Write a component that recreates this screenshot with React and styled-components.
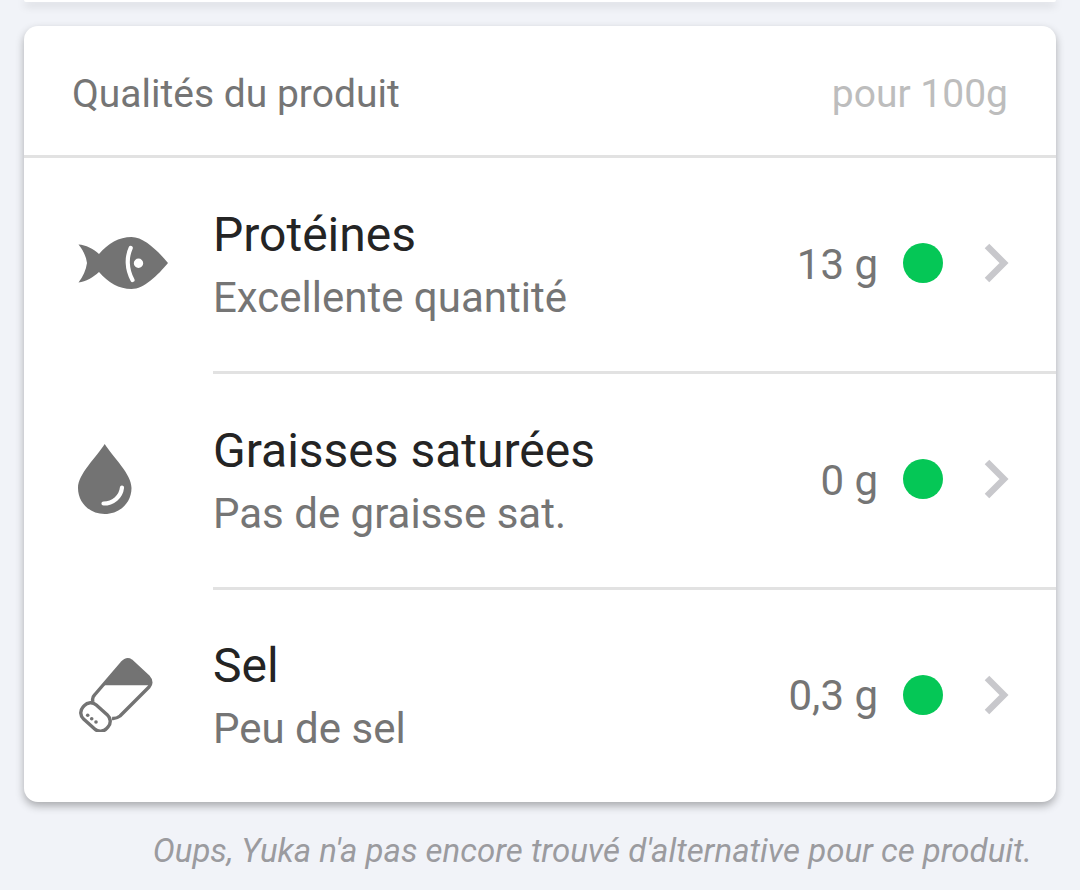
import styled, { createGlobalStyle } from "styled-components";

const GlobalStyle = createGlobalStyle`
  html, body {
    margin: 0;
    background: #f1f3f8;
    font-family: Roboto, "Noto Sans", sans-serif;
  }
`;

const rows = [
  { name: "Protéines", detail: "Excellente quantité", value: "13 g", Icon: FishIcon },
  { name: "Graisses saturées", detail: "Pas de graisse sat.", value: "0 g", Icon: DropIcon },
  { name: "Sel", detail: "Peu de sel", value: "0,3 g", Icon: SaltIcon },
];

function FishIcon() {
  return (
    <svg width="90" height="52" viewBox="0 0 90 52">
      <path
        fill="#737373"
        fillRule="evenodd"
        d="M0.5 7.5C8 8 15 11.5 21 17C30 6.5 41 0 53.5 0C66 0 80 14 90 26C80 38 66 52 53.5 52C41 52 30 45.5 21 35C15 40.5 8 44.5 0.5 45.5C5 40 8 33 9 26C8 19 5 13 0.5 7.5ZM60.5 21.5a4.7 4.7 0 1 0 0 9.4a4.7 4.7 0 1 0 0 -9.4Z"
      />
      <path d="M52.7 11C48.5 20 48.5 32 54.5 43" fill="none" stroke="#fff" strokeWidth="4.2" strokeLinecap="round" />
    </svg>
  );
}

function DropIcon() {
  return (
    <svg width="54" height="70" viewBox="0 0 54 70">
      <path
        fill="#737373"
        d="M26.7 0C35 13 53.5 30 53.5 44C53.5 59 41.5 70 26.7 70C12 70 0 59 0 44C0 30 18.5 13 26.7 0Z"
      />
      <path d="M25.5 59.5C35 59.5 43 53 44 43.5" fill="none" stroke="#fff" strokeWidth="4.2" strokeLinecap="round" />
    </svg>
  );
}

function SaltIcon() {
  return (
    <svg width="76" height="78" viewBox="-3 -5 76 78">
      <path
        fill="#737373"
        d="M21.8 26.3L41 4Q45.7 -1 50 1.8L67 17.5Q71 21 69.5 26.3Z"
      />
      <path
        d="M12 43C11 40 11.5 38 13.5 36L41 4Q45.7 -1 50 1.8L67 17.5Q72 23 68 28L39 57Q35 60 31 59.5"
        fill="none"
        stroke="#737373"
        strokeWidth="3.4"
        strokeLinejoin="round"
      />
      <rect
        x="-1.5"
        y="48.5"
        width="32"
        height="19"
        rx="8.5"
        transform="rotate(42 14.5 58)"
        fill="#fff"
        stroke="#737373"
        strokeWidth="3.4"
      />
      <circle cx="6.7" cy="56.3" r="1.8" fill="#737373" />
      <circle cx="10.7" cy="59.7" r="1.8" fill="#737373" />
      <circle cx="15" cy="63" r="1.8" fill="#737373" />
    </svg>
  );
}

function Chevron() {
  return (
    <svg width="26" height="40" viewBox="0 0 26 40">
      <path d="M3 3L20 20L3 37" fill="none" stroke="#c8c8cc" strokeWidth="6.4" />
    </svg>
  );
}

export default function App() {
  return (
    <>
      <GlobalStyle />
      <Page>
        <PreviousCard />
        <Card>
          <Header>
            <HeaderTitle>Qualités du produit</HeaderTitle>
            <HeaderUnit>pour 100g</HeaderUnit>
          </Header>
          {rows.map(({ name, detail, value, Icon }, i) => (
            <Row key={name} $last={i === rows.length - 1}>
              <IconCell>
                <Icon />
              </IconCell>
              <RowBody $last={i === rows.length - 1}>
                <Labels>
                  <Name>{name}</Name>
                  <Detail>{detail}</Detail>
                </Labels>
                <Value>{value}</Value>
                <Dot />
                <Chevron />
              </RowBody>
            </Row>
          ))}
        </Card>
        <Note>Oups, Yuka n'a pas encore trouvé d'alternative pour ce produit.</Note>
      </Page>
    </>
  );
}

const Page = styled.div`
  height: 890px;
  padding: 0 24px;
  box-sizing: border-box;
  overflow: hidden;
`;

const PreviousCard = styled.div`
  height: 2px;
  margin-bottom: 24px;
  background: #fff;
  border-radius: 0 0 12px 12px;
  box-shadow: 0 3px 8px rgba(0, 0, 0, 0.28);
`;

const Card = styled.section`
  background: #fff;
  border-radius: 14px;
  box-shadow: 0 4px 9px rgba(0, 0, 0, 0.3);
`;

const Header = styled.header`
  height: 132px;
  padding: 6px 48px 0;
  box-sizing: border-box;
  display: flex;
  align-items: center;
  justify-content: space-between;
  border-bottom: 3px solid #e2e2e2;
`;

const HeaderTitle = styled.span`
  font-size: 39px;
  color: #757575;
`;

const HeaderUnit = styled.span`
  font-size: 39px;
  color: #bdbdbd;
`;

const Row = styled.div`
  display: flex;
  height: ${(p) => (p.$last ? "212px" : "216px")};
`;

const IconCell = styled.div`
  width: 189px;
  padding: 0 0 7px 54px;
  box-sizing: border-box;
  display: flex;
  align-items: center;
  flex-shrink: 0;
`;

const RowBody = styled.div`
  flex: 1;
  display: flex;
  align-items: center;
  padding: 0 46px 3px 0;
  box-sizing: border-box;
  border-bottom: ${(p) => (p.$last ? "none" : "3px solid #e2e2e2")};
`;

const Labels = styled.div`
  flex: 1;
  display: flex;
  flex-direction: column;
  gap: 7px;
  padding-top: 6px;
`;

const Name = styled.div`
  font-size: 48px;
  line-height: 56px;
  color: #242424;
`;

const Detail = styled.div`
  font-size: 42px;
  line-height: 56px;
  color: #757575;
`;

const Value = styled.span`
  font-size: 42px;
  padding-top: 2px;
  color: #757575;
`;

const Dot = styled.span`
  width: 40px;
  height: 40px;
  margin: 0 41px 0 25px;
  border-radius: 50%;
  background: #05c756;
`;

const Note = styled.p`
  margin: 29px 24px 0 0;
  text-align: right;
  font-size: 33px;
  font-style: italic;
  color: #9b9b9f;
`;
